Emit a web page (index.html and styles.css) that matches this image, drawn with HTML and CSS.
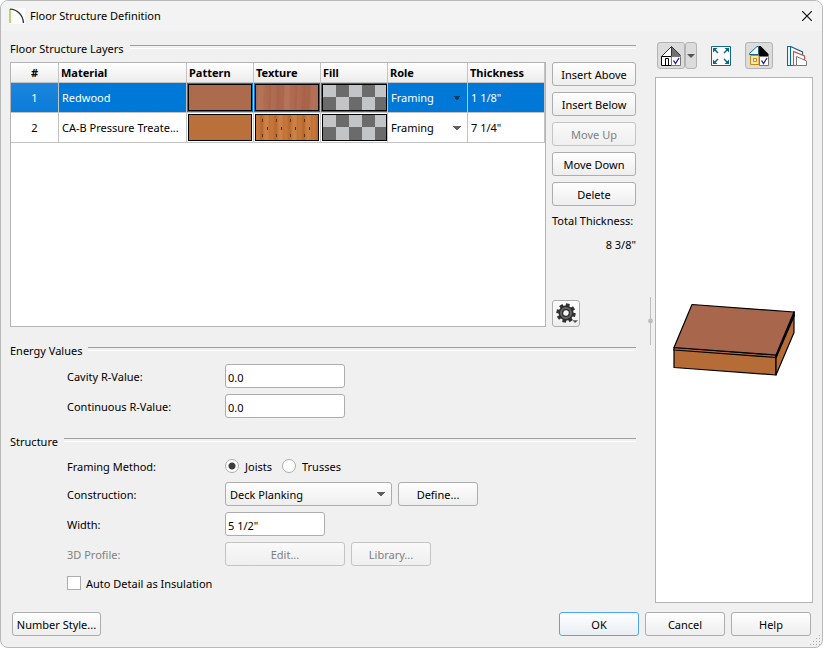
FILE: index.html
```html
<!DOCTYPE html>
<html lang="en">
<head>
<meta charset="utf-8">
<title>Floor Structure Definition</title>
<link rel="stylesheet" href="styles.css">
</head>
<body>
<div class="dialog">
  <header class="titlebar">
    <svg class="logo" viewBox="0 0 16 16" aria-hidden="true">
      <rect width="16" height="16" fill="#fff"/>
      <path d="M1 1V15" stroke="#9bc53d" stroke-width="1.4"/>
      <path d="M1 1.2C8.500 1.500 14 7 14.500 15" fill="none" stroke="#333" stroke-width="1.300"/>
    </svg>
    <h1>Floor Structure Definition</h1>
    <button class="close" type="button" aria-label="Close">
      <svg viewBox="0 0 10 10" aria-hidden="true"><path d="M0 0L10 10M10 0L0 10" stroke="#111" stroke-width="1.200"/></svg>
    </button>
  </header>

  <main class="main">
    <form class="settings">
      <section>
        <h2 class="heading">Floor Structure Layers</h2>
        <div class="layers">
          <div class="table-box">
            <table>
              <colgroup><col class="c-num"><col><col class="c-swatch"><col class="c-swatch"><col class="c-swatch"><col class="c-role"><col class="c-thick"></colgroup>
              <thead>
                <tr><th class="num">#</th><th>Material</th><th>Pattern</th><th>Texture</th><th>Fill</th><th>Role</th><th>Thickness</th></tr>
              </thead>
              <tbody>
                <tr class="selected">
                  <td class="num">1</td><td>Redwood</td>
                  <td class="sw"><div class="swatch redwood"></div></td>
                  <td class="sw"><div class="swatch redwood-grain"></div></td>
                  <td class="sw fill"><div class="swatch checker"></div></td>
                  <td><select class="role" aria-label="Role of layer 1"><option>Framing</option></select></td>
                  <td>1 1/8"</td>
                </tr>
                <tr>
                  <td class="num">2</td><td>CA-B Pressure Treate...</td>
                  <td class="sw"><div class="swatch treated"></div></td>
                  <td class="sw"><div class="swatch treated-grain"></div></td>
                  <td class="sw fill"><div class="swatch checker"></div></td>
                  <td><select class="role" aria-label="Role of layer 2"><option>Framing</option></select></td>
                  <td>7 1/4"</td>
                </tr>
              </tbody>
            </table>
          </div>
          <div class="actions">
            <button type="button">Insert Above</button>
            <button type="button">Insert Below</button>
            <button type="button" disabled>Move Up</button>
            <button type="button">Move Down</button>
            <button type="button">Delete</button>
            <p>Total Thickness:</p>
            <p class="total">8 3/8"</p>
            <button type="button" class="gear" aria-label="Options">
              <svg viewBox="0 0 26 26" aria-hidden="true">
                <g transform="translate(13 12.500) rotate(12)">
                  <g fill="#303030">
                    <rect x="-2" y="-10" width="4" height="20"/>
                    <rect x="-2" y="-10" width="4" height="20" transform="rotate(45)"/>
                    <rect x="-2" y="-10" width="4" height="20" transform="rotate(90)"/>
                    <rect x="-2" y="-10" width="4" height="20" transform="rotate(135)"/>
                  </g>
                  <circle r="7" fill="#666" stroke="#2c2c2c" stroke-width="1.500"/>
                  <circle r="3.500" fill="#f6f6f6" stroke="#2c2c2c" stroke-width="1.300"/>
                </g>
                <path d="M19.500 20h6l-3 3z" fill="#555"/>
              </svg>
            </button>
          </div>
        </div>
      </section>

      <section>
        <h2 class="heading">Energy Values</h2>
        <div class="fields">
          <label for="cavity">Cavity R-Value:</label>
          <div class="row"><input class="w-120" id="cavity" type="text" value="0.0"></div>
          <label for="continuous">Continuous R-Value:</label>
          <div class="row"><input class="w-120" id="continuous" type="text" value="0.0"></div>
        </div>
      </section>

      <section>
        <h2 class="heading">Structure</h2>
        <div class="fields">
          <span class="short" id="method">Framing Method:</span>
          <div class="row short" role="radiogroup" aria-labelledby="method">
            <label class="choice"><input type="radio" name="framing" checked><span>Joists</span></label>
            <label class="choice"><input type="radio" name="framing"><span>Trusses</span></label>
          </div>
          <label for="construction">Construction:</label>
          <div class="row">
            <select class="combo" id="construction"><option>Deck Planking</option></select>
            <button type="button" class="w-80">Define...</button>
          </div>
          <label for="width">Width:</label>
          <div class="row"><input class="w-100" id="width" type="text" value='5 1/2"'></div>
          <span class="muted">3D Profile:</span>
          <div class="row">
            <button type="button" class="w-120" disabled>Edit...</button>
            <button type="button" class="w-80" disabled>Library...</button>
          </div>
          <label class="choice wide"><input type="checkbox"><span>Auto Detail as Insulation</span></label>
        </div>
      </section>
    </form>

    <div class="splitter">
      <svg viewBox="0 0 5 48" aria-hidden="true"><path d="M2 0h1v48h-1z" fill="#bdbdbd"/><circle cx="2.500" cy="24" r="2.400" fill="#bdbdbd"/></svg>
    </div>

    <aside class="preview">
      <div class="tools">
        <button type="button" class="tool on" aria-label="House view">
          <svg viewBox="0 0 20 20" aria-hidden="true">
            <path d="M10.500 .5L.5 10.500h10z" fill="#fff"/>
            <path d="M10.500 .5L19.500 9v1.500h-9z" fill="#707070"/>
            <path d="M.5 10.500L10.500 .5l9 9M10.500 1v10" fill="none" stroke="#333"/>
            <path d="M.5 10.500h10v9H.5z" fill="#fff" stroke="#000"/>
            <path d="M4.500 19v-6.500h3V19" fill="#fff" stroke="#000"/>
            <path d="M10.500 10.500h9v9h-9z" fill="#fff" stroke="#777"/>
            <path d="M12.500 14.500l2 3L18 12" fill="none" stroke="#1d1d9f" stroke-width="1.300"/>
          </svg>
        </button>
        <button type="button" class="drop" aria-label="View options"><svg viewBox="0 0 8 4" aria-hidden="true"><path d="M0 0h8L4 4z" fill="#555"/></svg></button>
        <button type="button" class="tool fill-window" aria-label="Fill window">
          <svg viewBox="0 0 20 20" aria-hidden="true">
            <path d="M.5 .5h19v19h-19z" fill="#fff" stroke="#12688a"/>
            <path d="M2 2h4.500L2 6.500zM18 2h-4.500L18 6.500zM2 18h4.500L2 13.500zM18 18h-4.500l4.500-4.500z" fill="#12688a"/>
            <path d="M3 3l4 4M17 3l-4 4M3 17l4-4M17 17l-4-4" stroke="#12688a" stroke-width="1.500"/>
          </svg>
        </button>
        <button type="button" class="tool on color" aria-label="Color">
          <svg viewBox="0 0 20 20" aria-hidden="true">
            <path d="M9.500 .5H8L.5 7.500v1h9z" fill="#fff" stroke="#12688a"/>
            <path d="M10 0h1.500L19.500 8v2.500H10z" fill="#000"/>
            <path d="M1.500 9.500h8.500v9H1.500z" fill="#fbe6a6" stroke="#c58a16"/>
            <path d="M4.500 12.500h3v3h-3z" fill="#fff6d8" stroke="#c58a16"/>
            <path d="M10.500 10.500h9v9h-9z" fill="#fff" stroke="#777"/>
            <path d="M12.500 14.500l2 3L18 12" fill="none" stroke="#1d1d9f" stroke-width="1.300"/>
          </svg>
        </button>
        <button type="button" class="tool" aria-label="Layers view">
          <svg viewBox="0 0 20 20" aria-hidden="true">
            <path d="M.5 19.500V.5h3L15.500 6v13.500z" fill="#fff"/>
            <path d="M6 19.500H.5V.5h3L15.500 6v3M3.500 .5v19" fill="none" stroke="#12688a" stroke-width="1.200"/>
            <path d="M9 19.500H6.500v-14L17.500 10v4" fill="#fff" stroke="#d9503f" stroke-width="1.200"/>
            <path d="M9.500 19.500v-9l10 4.500v4.500z" fill="#fff" stroke="#777"/>
          </svg>
        </button>
      </div>
      <div class="canvas">
        <svg viewBox="0 0 124 74" role="img" aria-label="Floor structure, two layers">
          <g stroke="#000" stroke-width="1.200" stroke-linejoin="round">
            <path d="M2 46L104 54V72L2 64.500z" fill="#b56c37"/>
            <path d="M104 54L122 9V29.500L104 72z" fill="#b56c37"/>
            <path d="M2 44.500L104 52V54.500L2 47z" fill="#a8654b"/>
            <path d="M104 52L122 9v4L104 54.500z" fill="#2b1710" stroke-width="1.500"/>
            <path d="M20 1.500L122 9 104 52 2 44.500z" fill="#a8664c"/>
          </g>
        </svg>
      </div>
    </aside>
  </main>

  <footer class="footer">
    <button type="button" class="style-button">Number Style...</button>
    <div class="confirm">
      <button type="button" class="w-80 default">OK</button>
      <button type="button" class="w-80">Cancel</button>
      <button type="button" class="w-80">Help</button>
    </div>
  </footer>
  <svg class="grip" viewBox="0 0 11 11" aria-hidden="true"><path d="M9 0h1v1h-1zM6 3h1v1h-1zM9 3h1v1h-1zM3 6h1v1h-1zM6 6h1v1h-1zM9 6h1v1h-1zM0 9h1v1h-1zM3 9h1v1h-1zM6 9h1v1h-1zM9 9h1v1h-1z" fill="#aaa"/></svg>
</div>
</body>
</html>
```
FILE: styles.css
```css
* { box-sizing: border-box; }

body {
  margin: 0;
  background: #fff;
  color: #000;
  font: 11px/16px "Noto Sans", "Open Sans", sans-serif;
}

h1, h2, p { margin: 0; font-size: inherit; font-weight: 400; }

.dialog {
  position: relative;
  display: flex;
  flex-direction: column;
  min-height: 100vh;
  border: 1px solid #b9b9b9;
  border-radius: 8px;
  background: #f0f0f0;
  overflow: hidden;
}

.titlebar {
  display: flex;
  align-items: center;
  gap: 5px;
  height: 30px;
  padding: 0 10px 0 8px;
  background: #f3f3f3;
}
.logo { width: 16px; height: 16px; }
.close {
  display: flex;
  width: 10px;
  height: 10px;
  margin-left: auto;
  padding: 0;
  border: 0;
  background: none;
}
.close svg { width: 10px; height: 10px; }

.main {
  flex: 1;
  display: grid;
  grid-template-columns: minmax(0, 1fr) 19px 158px;
  padding: 0 9px;
}

.settings {
  display: flex;
  flex-direction: column;
  gap: 16px;
  padding-top: 10px;
}

.heading {
  display: flex;
  align-items: center;
  gap: 6px;
  margin-bottom: 5px;
}
.heading::after {
  content: "";
  flex: 1;
  height: 2px;
  margin-bottom: 4px;
  border-top: 1px solid #a0a0a0;
  border-bottom: 1px solid #fff;
}

button, input, select { font: inherit; color: inherit; }

button {
  height: 24px;
  padding: 2px 3px 0;
  border: 1px solid #adadad;
  border-radius: 3px;
  background: linear-gradient(#fefefe, #eee);
  line-height: 16px;
  white-space: nowrap;
}
button:disabled { border-color: #c4c4c4; color: #808080; background: linear-gradient(#f9f9f9, #efefef); }
.default { border-color: #4fa8ee; background: linear-gradient(#fefefe, #e9eef3); }

.layers { display: flex; gap: 6px; min-height: 265px; }
.table-box { flex: 1; border: 1px solid #b4b4b4; background: #fff; }

table { width: 100%; table-layout: fixed; border-collapse: separate; border-spacing: 0; }
.c-num { width: 48px; }
.c-swatch { width: 67px; }
.c-role { width: 80px; }
.c-thick { width: 77px; }
th, td {
  padding: 0 3px;
  border: solid #c3c3c3;
  border-width: 0 1px 1px 0;
  text-align: left;
  white-space: nowrap;
  overflow: hidden;
}
th { height: 20px; padding: 1px 2px 0; background: linear-gradient(#fff, #ececec); font-weight: 700; line-height: 16px; }
td { height: 30px; }
th.num, td.num { text-align: center; }
.selected td { background: #0078d7; color: #fff; }
.selected td.num { background: linear-gradient(#1c86dd, #0a7cd8); }
td.sw { padding: 1px; }
td.fill { padding-right: 0; }

.swatch { height: 27px; border: 1px solid #000; }
.redwood { background: #ac6b4d; }
.treated { background: #b9703b; }
.redwood-grain {
  background:
    repeating-linear-gradient(92deg, #9c503a33 0 2px, #c0806026 3px 7px, #a3584022 9px 13px),
    linear-gradient(90deg, #b47559, #a9644b 35%, #b5725a 50%, #a9624b 75%, #b37258);
}
.treated-grain {
  background:
    repeating-linear-gradient(90deg, transparent 0 6px, #5d3410 6px 7px, transparent 7px 14px) 0 4px / 28px 3px repeat-x,
    repeating-linear-gradient(90deg, transparent 0 11px, #4a2c0c 11px 12px, transparent 12px 14px) 0 12px / 28px 3px repeat-x,
    repeating-linear-gradient(90deg, transparent 0 6px, #5d3410 6px 7px, transparent 7px 14px) 0 19px / 28px 3px repeat-x,
    repeating-linear-gradient(90deg, #c47638 0 3px, #b86731 5px 6px, #cb8145 9px 12px, #bb6c33 14px);
}
.checker {
  background: repeating-conic-gradient(#6b6b6b 0 25%, #c3c4c6 0 50%) 0 -1px / 26px 26px;
}

select { appearance: none; }
.role, .combo {
  background-repeat: no-repeat;
  background-image: conic-gradient(from -45deg at 50% 100%, #606060 90deg, transparent 0);
  background-size: 8px 4px;
  background-position: right 6px center;
}
.role { display: block; width: 100%; height: 24px; padding: 0; border: 0; background-color: transparent; background-position: right 3px center; }
.selected .role { background-image: conic-gradient(from -45deg at 50% 100%, #0a3a66 90deg, transparent 0); }

.actions { display: flex; flex-direction: column; gap: 6px; width: 84px; }
.actions p { line-height: 18px; white-space: nowrap; }
.total { text-align: right; }
.gear { width: 28px; height: 27px; margin-top: auto; padding: 0; }
.gear svg { display: block; width: 26px; height: 25px; }

.fields {
  display: grid;
  grid-template-columns: 158px 1fr;
  gap: 6px 0;
  padding-left: 57px;
}
.fields > label, .fields > span { height: 24px; line-height: 26px; }
.row { display: flex; gap: 6px; height: 24px; }
.fields > .short { height: 21px; line-height: 23px; }
.muted { color: #808080; }
.fields > .wide { grid-column: 1 / -1; height: 22px; line-height: 22px; }

input[type="text"] {
  height: 24px;
  padding: 2px 2px 0;
  border: 1px solid #adadad;
  border-radius: 3px;
  background: #fff;
}
.w-80 { width: 80px; }
.w-100 { width: 100px; }
.w-120 { width: 120px; }
.combo {
  width: 167px;
  height: 24px;
  padding: 2px 4px 0;
  border: 1px solid #adadad;
  border-radius: 3px;
  background-image: conic-gradient(from -45deg at 50% 100%, #606060 90deg, transparent 0), linear-gradient(#fefefe, #eee);
  background-size: 8px 4px, 100% 100%;
  background-position: right 6px center, 0 0;
}

.choice { display: flex; align-items: center; gap: 5px; }
.choice span { padding-top: 1px; }
.row .choice { gap: 6px; height: 21px; }
.row .choice + .choice { margin-left: 4px; }
.choice input { appearance: none; width: 14px; height: 14px; margin: 0; border: 1px solid #adadad; background: #fff; }
.choice input[type="radio"] { border-radius: 50%; }
.choice input[type="radio"]:checked { background: radial-gradient(circle, #3c3c3c 3px, #fff 4px); }

.splitter { display: flex; align-items: center; justify-content: flex-end; padding: 8px 2px 0 0; }
.splitter svg { width: 5px; height: 48px; }

.preview { display: flex; flex-direction: column; gap: 8px; padding-top: 11px; }
.tools { display: flex; padding-left: 2px; }
.tool {
  display: grid;
  place-items: center;
  width: 28px;
  height: 27px;
  padding: 0;
  border-color: transparent;
  background: none;
}
.on, .drop { border-color: #b4b4b4; background: #dcdcdc; }
.tool svg { width: 20px; height: 20px; }
.drop { display: grid; place-items: center; width: 12px; height: 27px; padding: 0; }
.drop svg { width: 8px; height: 4px; }
.fill-window { margin-left: 10px; }
.color { margin: 0 10px; }

.canvas {
  flex: 1;
  display: flex;
  align-items: center;
  justify-content: center;
  border: 1px solid #b4b4b4;
  background: #fff;
}
.canvas svg { width: 124px; height: 74px; }

.footer {
  display: flex;
  justify-content: space-between;
  padding: 9px 11px 11px;
}
.style-button { width: 89px; }
.confirm { display: flex; gap: 6px; }
.grip { position: absolute; right: 1px; bottom: 1px; width: 11px; height: 11px; }
```
